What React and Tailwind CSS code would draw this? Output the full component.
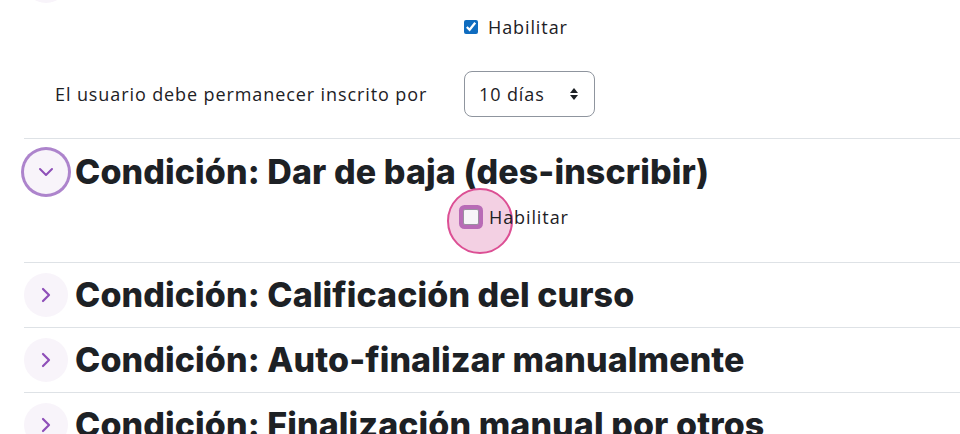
import { useState } from "react";

const ChevronDown = () => (
  <svg width="16" height="10" viewBox="0 0 16 10" fill="none">
    <path d="M2 2l6 6 6-6" stroke="#8e4fb8" strokeWidth="2" strokeLinecap="round" strokeLinejoin="round" />
  </svg>
);

const ChevronRight = () => (
  <svg width="10" height="16" viewBox="0 0 10 16" fill="none">
    <path d="M2 2l6 6-6 6" stroke="#8e4fb8" strokeWidth="2.2" strokeLinecap="round" strokeLinejoin="round" />
  </svg>
);

const Sorter = () => (
  <svg width="10" height="14" viewBox="0 0 10 14">
    <path d="M5 1L9 6H1z" fill="#1d2125" />
    <path d="M5 13L1 8h8z" fill="#1d2125" />
  </svg>
);

const headingCls =
  "ml-[7px] text-[34px] font-extrabold text-[#1d2125] leading-none tracking-[0.1px] whitespace-nowrap font-['Inter',sans-serif]";

const Collapsed = ({ title }) => (
  <div className="border-t border-[#dee2e6] h-[65px] flex items-center">
    <div className="w-[44px] h-[44px] rounded-full bg-[#f8f4fa] flex items-center justify-center shrink-0">
      <ChevronRight />
    </div>
    <h3 className={headingCls}>{title}</h3>
  </div>
);

export default function App() {
  const [enabled, setEnabled] = useState(true);
  const [unenrol, setUnenrol] = useState(false);

  return (
    <div className="w-[960px] h-[434px] overflow-hidden bg-white pl-6 font-['Open_Sans',sans-serif] text-[18px] tracking-[0.9px] text-[#1d2125] relative">
      <div className="h-[138px]">
        <div className="h-[3px] overflow-hidden">
          <div className="w-[44px] h-[44px] -mt-[41px] rounded-full bg-[#f8f4fa]" />
        </div>
        <div className="pt-[17px] pl-[440px] h-[31px] flex items-center">
          <label className="flex items-center gap-[10px] leading-none">
            <input
              type="checkbox"
              checked={enabled}
              onChange={() => setEnabled(!enabled)}
              className="w-[14px] h-[14px] accent-[#0f6cbf] m-0"
            />
            Habilitar
          </label>
        </div>
        <div className="mt-[37px] h-[46px] flex items-center">
          <div className="w-[440px] pl-[31px]">El usuario debe permanecer inscrito por</div>
          <div className="w-[131px] h-[46px] border border-[#8f959e] rounded-lg flex items-center justify-between pl-[14px] pr-[15px]">
            <span>10 días</span>
            <Sorter />
          </div>
        </div>
      </div>

      <div className="border-t border-[#dee2e6]">
        <div className="h-[65px] flex items-center">
          <div className="w-[44px] h-[44px] rounded-full bg-[#f8f4fa] ring-[3px] ring-[#ad84cc] flex items-center justify-center shrink-0">
            <ChevronDown />
          </div>
          <h3 className={headingCls}>Condición: Dar de baja (des-inscribir)</h3>
        </div>
        <div className="h-[26px] mb-[32px] pl-[440px] flex items-center">
          <label className="flex items-center gap-[10px] leading-none relative">
            <span className="absolute left-[-17px] top-[-20px] w-[66px] h-[66px] rounded-full bg-[#f3d0e3] border-2 border-[#dc4f94]" />
            <span className="relative w-[16px] h-[16px] -ml-[1px] bg-[#f7f5f8] border border-[#9a8fa0] rounded-[2px] shadow-[0_0_0_4px_#b86bb6]">
              <input
                type="checkbox"
                checked={unenrol}
                onChange={() => setUnenrol(!unenrol)}
                className="absolute inset-0 opacity-0"
              />
            </span>
            <span className="relative">Habilitar</span>
          </label>
        </div>
      </div>

      <Collapsed title="Condición: Calificación del curso" />
      <Collapsed title="Condición: Auto-finalizar manualmente" />
      <Collapsed title="Condición: Finalización manual por otros" />
    </div>
  );
}
